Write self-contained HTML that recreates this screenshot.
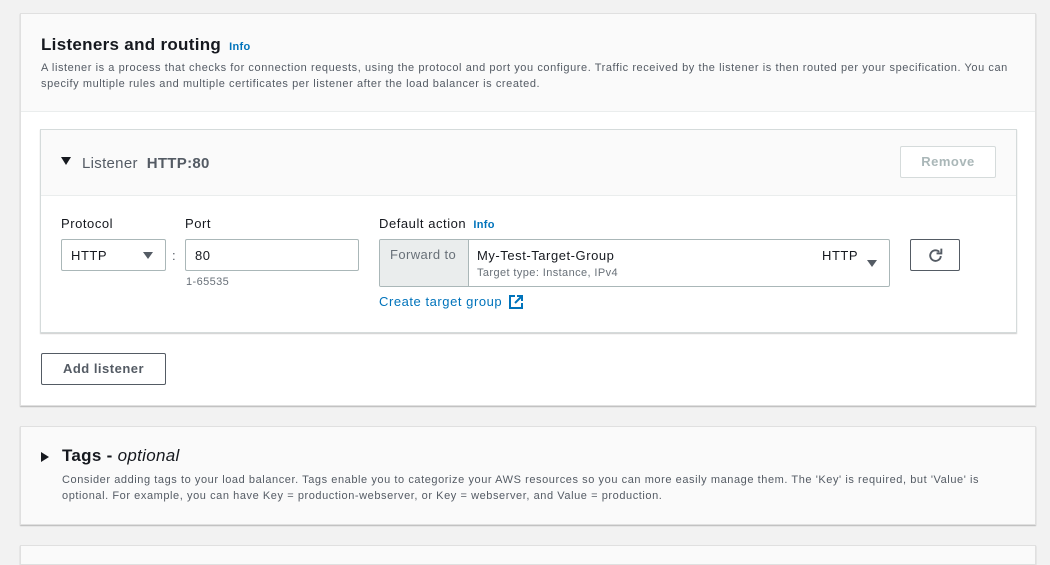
<!DOCTYPE html>
<html><head><style>
*{box-sizing:border-box;margin:0;padding:0}
body{width:1050px;height:549px;background:#f2f2f2;font-family:"Liberation Sans",sans-serif;color:#16191f;position:relative;overflow:hidden}
.a{position:absolute}
.panel{background:#fff;border:1px solid #e0e0e0;box-shadow:0 1px 1px rgba(0,0,0,.25)}
.info{color:#0073bb;font-weight:bold;font-size:11px;letter-spacing:.3px}
.desc{font-size:11px;color:#545b64;line-height:16px;letter-spacing:.57px}
.t13{font-size:13px;letter-spacing:.55px}
.inp{border:1px solid #aab7b8;border-radius:2px;background:#fff}
.tri{width:0;height:0;border-left:5px solid transparent;border-right:5px solid transparent;border-top:7px solid #545b64}
</style></head><body>
<div class="a panel" style="left:20px;top:13px;width:1016px;height:393px"></div>
<div class="a" style="left:21px;top:14px;width:1014px;height:98px;background:#fafafa;border-bottom:1px solid #eaeded"></div>
<div class="a" style="left:41px;top:35px;font-size:17px;font-weight:bold;letter-spacing:.3px">Listeners and routing <span class="info" style="margin-left:3px">Info</span></div>
<div class="a desc" style="left:41px;top:60px;width:980px">A listener is a process that checks for connection requests, using the protocol and port you configure. Traffic received by the listener is then routed per your specification. You can specify multiple rules and multiple certificates per listener after the load balancer is created.</div>

<div class="a" style="left:40px;top:129px;width:977px;height:204px;border:1px solid #d5dbdb;background:#fff;box-shadow:0 1px 1px rgba(0,0,0,.2)"></div>
<div class="a" style="left:41px;top:130px;width:975px;height:66px;background:#fafafa;border-bottom:1px solid #eaeded"></div>
<div class="a" style="left:61px;top:157px;width:0;height:0;border-left:5px solid transparent;border-right:5px solid transparent;border-top:8px solid #16191f"></div>
<div class="a" style="left:82px;top:155px;font-size:15px;color:#545b64;letter-spacing:.3px">Listener&nbsp; <b style="color:#545b64">HTTP:80</b></div>
<div class="a" style="left:900px;top:146px;width:96px;height:32px;border:1px solid #d5dbdb;border-radius:2px;background:#fff;color:#aab7b8;font-weight:bold;font-size:13px;text-align:center;line-height:30px;letter-spacing:.5px">Remove</div>

<div class="a t13" style="left:61px;top:216px">Protocol</div>
<div class="a inp" style="left:61px;top:239px;width:105px;height:32px"><span class="a t13" style="left:9px;top:8px">HTTP</span><div class="a tri" style="left:81px;top:12px"></div></div>
<div class="a" style="left:172px;top:248px;font-size:13px;color:#545b64">:</div>
<div class="a t13" style="left:185px;top:216px">Port</div>
<div class="a inp" style="left:185px;top:239px;width:174px;height:32px"><span class="a t13" style="left:9px;top:8px">80</span></div>
<div class="a" style="left:186px;top:276px;font-size:11px;color:#687078;letter-spacing:.4px">1-65535</div>

<div class="a t13" style="left:379px;top:216px">Default action <span class="info" style="margin-left:3px">Info</span></div>
<div class="a inp" style="left:379px;top:239px;width:511px;height:48px;overflow:hidden">
<div class="a" style="left:0;top:0;width:89px;height:48px;background:#eaeded;border-right:1px solid #aab7b8"></div>
<span class="a t13" style="left:10px;top:7px;color:#687078;letter-spacing:.4px">Forward to</span>
<span class="a t13" style="left:97px;top:8px">My-Test-Target-Group</span>
<span class="a" style="left:97px;top:27px;font-size:11px;color:#687078;letter-spacing:.4px">Target type: Instance, IPv4</span>
<span class="a t13" style="left:442px;top:8px">HTTP</span>
<div class="a tri" style="left:487px;top:20px"></div>
</div>
<div class="a" style="left:910px;top:239px;width:50px;height:32px;border:1px solid #545b64;border-radius:2px;background:#fff">
<svg class="a" style="left:16px;top:7px" width="17" height="17" viewBox="0 0 16 16"><path d="M13 8.5A5 5 0 1 1 11.5 4.5" fill="none" stroke="#545b64" stroke-width="1.8"/><path d="M13.5 1.5V6H9" fill="none" stroke="#545b64" stroke-width="1.8"/></svg></div>
<div class="a t13" style="left:379px;top:294px;color:#0073bb">Create target group</div>
<svg class="a" style="left:509px;top:295px" width="14" height="14" viewBox="0 0 14 14"><path d="M6 1H1v12h12V8" fill="none" stroke="#0073bb" stroke-width="2"/><path d="M8 1h5v5M13 1L6 8" fill="none" stroke="#0073bb" stroke-width="2"/></svg>

<div class="a" style="left:41px;top:353px;width:125px;height:32px;border:1px solid #545b64;border-radius:2px;background:#fff;font-weight:bold;font-size:13px;color:#545b64;text-align:center;line-height:30px;letter-spacing:.5px">Add listener</div>

<div class="a panel" style="left:20px;top:426px;width:1016px;height:99px;background:#fafafa"></div>
<div class="a" style="left:41px;top:452px;width:0;height:0;border-top:5px solid transparent;border-bottom:5px solid transparent;border-left:8px solid #16191f"></div>
<div class="a" style="left:62px;top:446px;font-size:17px;letter-spacing:.3px"><b>Tags - </b><i>optional</i></div>
<div class="a desc" style="left:62px;top:472px;width:950px">Consider adding tags to your load balancer. Tags enable you to categorize your AWS resources so you can more easily manage them. The 'Key' is required, but 'Value' is optional. For example, you can have Key = production-webserver, or Key = webserver, and Value = production.</div>

<div class="a panel" style="left:20px;top:545px;width:1016px;height:20px;background:#fafafa"></div>
</body></html>
